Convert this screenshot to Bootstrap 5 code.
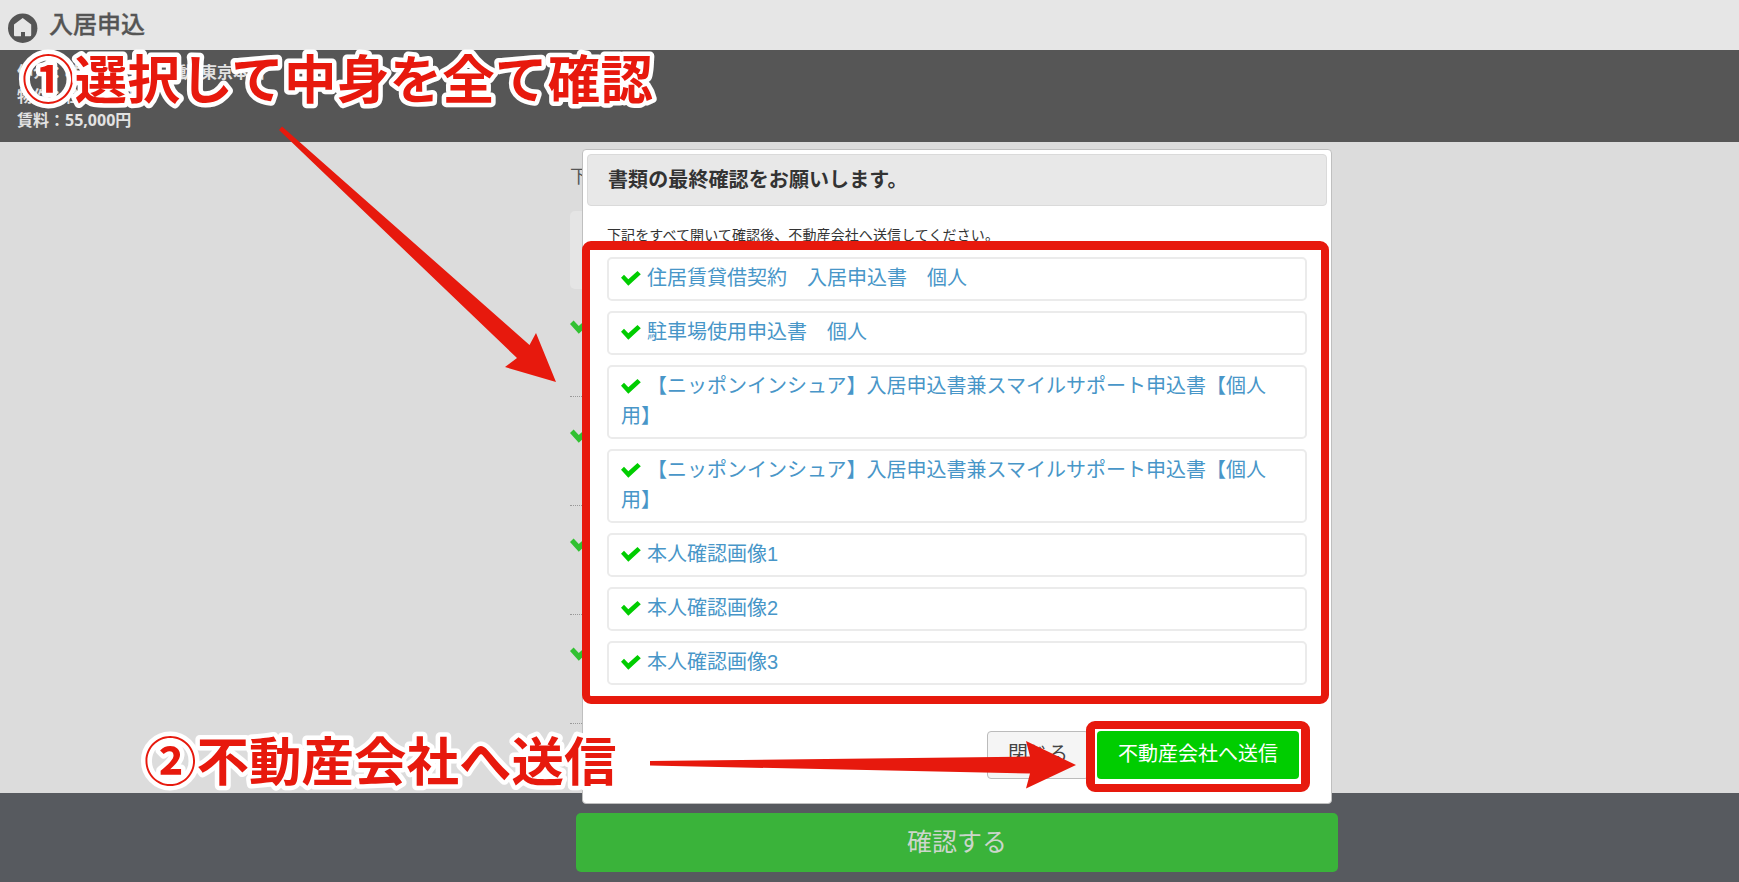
<!DOCTYPE html>
<html lang="ja">
<head>
  <meta charset="UTF-8">
  <title>入居申込</title>
  <link href="https://cdn.jsdelivr.net/npm/bootstrap@5.3.0/dist/css/bootstrap.min.css" rel="stylesheet">
  <style>
    body { font-family: "Liberation Sans", "Noto Sans CJK JP", sans-serif; background: #dcdcdc; color: #333; height: 882px; }
    .topbar { height: 50px; background: #e6e6e6; padding: 0 8px; }
    .topbar h1 { font-size: 24px; font-weight: 500; color: #555; line-height: 50px; margin-left: 11px; -webkit-text-stroke: .3px #555; }
    .topbar svg { margin-top: 13px; }
    .info { height: 92px; background: #565656; color: #e2e2e2; font: bold 16px/24px "Open Sans", "Noto Sans CJK JP", sans-serif; padding: 10px 17px; }
    .page-col { width: 750px; height: 651px; margin-left: 570px; }
    .lead-text { font-size: 18px; line-height: 24px; padding-top: 23px; color: #555; height: 69px; }
    .notice { height: 78px; background: #e5e5e5; border-radius: 5px; margin-bottom: -1px; }
    .step { height: 109px; border-bottom: 1px dotted #999; padding-top: 24px; }
    .step svg { width: 24px; height: 18px; fill: #32c132; }
    .bottombar { height: 89px; background: #575a5f; padding-top: 20px; }
    .btn-confirm { width: 762px; height: 59px; margin-left: 576px; background: #3ab33a; color: #ccd6cc; font-size: 25px; border: 0; border-radius: 5px; padding: 1px 0 0; }
    .dialog-box { left: 582px; top: 149px; width: 750px; height: 655px; background: #fff; border: 1px solid #bfbfbf; border-radius: 4px; padding: 4px; }
    .dialog-head { height: 52px; background: #e8e8e8; border: 1px solid #dadada; border-radius: 4px; font-size: 20px; font-weight: bold; line-height: 51px; letter-spacing: .1px; padding-left: 20px; }
    .dialog-main { padding: 19px 20px 0; }
    .dialog-main p { font-size: 14px; line-height: 20px; letter-spacing: .1px; margin-bottom: 12px; }
    .doc-list { gap: 10px; }
    .doc { display: block; border: 2px solid #ebebeb; border-radius: 5px; padding: 4px 30px 6px 12px; font-size: 20px; line-height: 30px; color: #4896c8; text-decoration: none; }
    .doc svg { width: 20px; height: 15px; fill: #00cd00; margin-right: 6px; vertical-align: -1px; }
    .dialog-foot { padding: 46px 28px 0 0; }
    .dialog-foot .btn { height: 48px; font-size: 20px; padding: 0 0 3px; border-radius: 4px; }
    .btn-close-dialog { width: 102px; background: #f5f5f5; border: 1px solid #bbb; color: #444; }
    .btn-send { width: 202px; background: #00cd00; border: 0; color: #fff; }
    .mark-box { border: 8px solid #e7190d; border-radius: 9px; }
    .mark-docs { left: 582px; top: 241px; width: 747px; height: 463px; border-top-width: 9px; }
    .mark-send { left: 1086px; top: 721px; width: 224px; height: 71px; border-left-width: 9px; border-right-width: 9px; }
    .guide { left: 0; top: 0; }
    .guide text { font: bold 52.5px "Noto Sans CJK JP", sans-serif; stroke: #fff; stroke-width: 9px; stroke-linejoin: round; paint-order: stroke; }
  </style>
</head>
<body class="position-relative overflow-hidden">
  <svg class="d-none">
    <symbol id="check" viewBox="0 0 20 15"><path d="M0 6.7 3 3.7 7.3 8.3 16.5 0 19.8 3.2 7.3 14.7z"/></symbol>
  </svg>

  <header class="topbar d-flex align-items-start">
    <svg width="30" height="30" viewBox="0 0 30 30">
      <circle cx="14.7" cy="15.2" r="14.7" fill="#555"/>
      <path d="M14.7 5 23.2 11.5V22q0 1.2-1.2 1.2H17V19h-4v4.2H7.2Q6 23.2 6 22V11.5z" fill="#e6e6e6"/>
    </svg>
    <h1 class="mb-0">入居申込</h1>
  </header>

  <div class="info">
    <div>仲介：株式会社日本不動&ensp;東京本店</div>
    <div>物件：住居ハイツ1</div>
    <div>賃料：55,000円</div>
  </div>

  <main class="page-col">
    <div class="lead-text">下記</div>
    <div class="notice"></div>
    <div class="step"><svg><use href="#check"/></svg></div>
    <div class="step"><svg><use href="#check"/></svg></div>
    <div class="step"><svg><use href="#check"/></svg></div>
    <div class="step"><svg><use href="#check"/></svg></div>
  </main>

  <footer class="bottombar">
    <button type="button" class="btn btn-confirm">確認する</button>
  </footer>

  <section class="dialog-box position-absolute">
    <div class="dialog-head">書類の最終確認をお願いします。</div>
    <div class="dialog-main">
      <p>下記をすべて開いて確認後、不動産会社へ送信してください。</p>
      <div class="doc-list d-grid">
        <a class="doc" href="#"><svg><use href="#check"/></svg>住居賃貸借契約　入居申込書　個人</a>
        <a class="doc" href="#"><svg><use href="#check"/></svg>駐車場使用申込書　個人</a>
        <a class="doc" href="#"><svg><use href="#check"/></svg>【ニッポンインシュア】入居申込書兼スマイルサポート申込書【個人用】</a>
        <a class="doc" href="#"><svg><use href="#check"/></svg>【ニッポンインシュア】入居申込書兼スマイルサポート申込書【個人用】</a>
        <a class="doc" href="#"><svg><use href="#check"/></svg>本人確認画像1</a>
        <a class="doc" href="#"><svg><use href="#check"/></svg>本人確認画像2</a>
        <a class="doc" href="#"><svg><use href="#check"/></svg>本人確認画像3</a>
      </div>
    </div>
    <div class="dialog-foot d-flex justify-content-end gap-2">
      <button type="button" class="btn btn-close-dialog">閉じる</button>
      <button type="button" class="btn btn-send">不動産会社へ送信</button>
    </div>
  </section>

  <!-- 操作説明 -->
  <div class="mark-box mark-docs position-absolute"></div>
  <div class="mark-box mark-send position-absolute"></div>
  <svg class="guide position-absolute" width="1739" height="882" fill="#e7190d">
    <path d="M279 130 282 126.5 529.5 345 536 333 556 382 505 367 517 358z"/>
    <path d="M650 761 1030 756.5 1026 741 1076 765 1026 788.5 1030 773.5 650 765.5z"/>
    <text x="22" y="98.5" textLength="631">①選択して中身を全て確認</text>
    <text x="144" y="780.5">②不動産会社へ送信</text>
  </svg>

  <script src="https://cdn.jsdelivr.net/npm/bootstrap@5.3.0/dist/js/bootstrap.bundle.min.js"></script>
</body>
</html>
